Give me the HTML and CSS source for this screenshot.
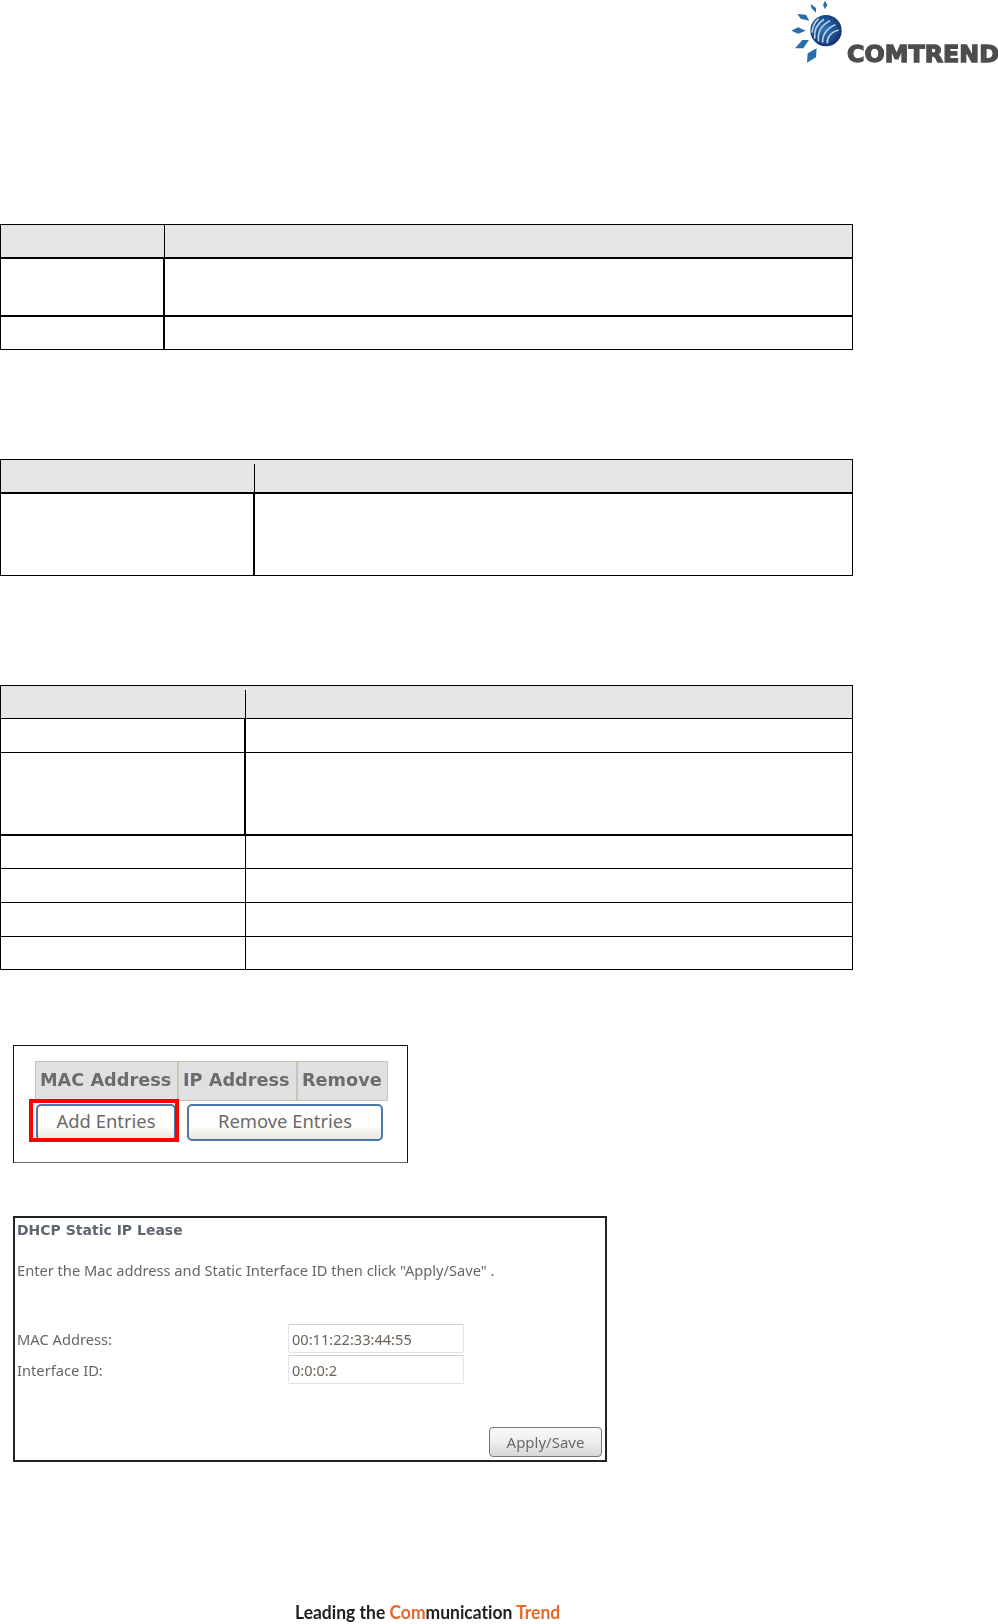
FILE: index.html
```html
<!DOCTYPE html>
<html lang="en">
<head>
<meta charset="utf-8">
<title>DHCP Static IP Lease</title>
<link rel="stylesheet" href="styles.css">
</head>
<body>
<div class="page">
  <header class="top">
    <svg class="logo" viewBox="0 0 684 240" width="228" height="80" aria-label="Comtrend logo">
      <defs>
        <radialGradient id="globe" cx="45%" cy="45%" r="60%">
          <stop offset="0" stop-color="#2f74b5"/>
          <stop offset=".65" stop-color="#1c4c8e"/>
          <stop offset="1" stop-color="#12285f"/>
        </radialGradient>
      </defs>
      <g class="rays">
        <polygon points="165,2 172,15 165,28 159,15"/>
        <polygon points="122,12 138,24 138,38 124,24"/>
        <polygon points="82,42 108,44 118,62 92,56"/>
        <polygon points="64,92 85,82 107,92 85,101"/>
        <polygon points="75,145 97,120 117,120 100,145"/>
        <polygon points="111,188 113,160 140,145 138,172"/>
      </g>
      <circle cx="168" cy="92" r="47" fill="url(#globe)"/>
      <g class="stripes">
        <path d="M126 98 C128 80 134 66 146 56"/>
        <path d="M134 116 C132 92 142 70 162 58 "/>
        <path d="M146 124 C142 100 152 76 180 62"/>
        <path d="M158 128 C156 106 170 84 196 74"/>
        <path d="M172 130 C170 112 182 96 206 90"/>
      </g>
      <text class="logo-text" x="231" y="186" textLength="456" lengthAdjust="spacingAndGlyphs">COMTREND</text>
    </svg>
  </header>

  <section class="tbl t1">
    <div class="row head thick"><div class="cell key"></div><div class="cell"></div></div>
    <div class="row r58 thick"><div class="cell key"></div><div class="cell"></div></div>
    <div class="row r32 last"><div class="cell key"></div><div class="cell"></div></div>
  </section>

  <section class="tbl t2">
    <div class="row head thick notch"><div class="cell key"></div><div class="cell"></div></div>
    <div class="row r81 last"><div class="cell key"></div><div class="cell"></div></div>
  </section>

  <section class="tbl t3">
    <div class="row head h33 notch"><div class="cell key"></div><div class="cell"></div></div>
    <div class="row r34"><div class="cell key"></div><div class="cell"></div></div>
    <div class="row r83 thick"><div class="cell key"></div><div class="cell"></div></div>
    <div class="row r33 slim"><div class="cell key"></div><div class="cell"></div></div>
    <div class="row r34 slim"><div class="cell key"></div><div class="cell"></div></div>
    <div class="row r34 slim"><div class="cell key"></div><div class="cell"></div></div>
    <div class="row r32 slim last"><div class="cell key"></div><div class="cell"></div></div>
  </section>

  <section class="shot entries">
    <div class="entry-head">
      <div class="eh">MAC Address</div>
      <div class="eh">IP Address</div>
      <div class="eh">Remove</div>
    </div>
    <div class="entry-actions">
      <span class="highlight"><button class="btn add" type="button">Add Entries</button></span>
      <button class="btn remove" type="button">Remove Entries</button>
    </div>
  </section>

  <section class="shot lease">
    <h1 class="lease-title">DHCP Static IP Lease</h1>
    <p class="lease-intro">Enter the Mac address and Static Interface ID then click "Apply/Save" .</p>
    <div class="form">
      <label class="lbl" for="mac">MAC Address:</label>
      <input class="field" id="mac" type="text" value="00:11:22:33:44:55">
      <label class="lbl" for="ifid">Interface ID:</label>
      <input class="field" id="ifid" type="text" value="0:0:0:2">
    </div>
    <div class="apply-row"><button class="apply" type="button">Apply/Save</button></div>
  </section>

  <footer class="foot">Leading the <span class="hot">Com</span>munication <span class="hot">Trend</span></footer>
</div>
</body>
</html>
```
FILE: styles.css
```css
* { box-sizing: border-box; }
html, body { margin: 0; padding: 0; background: #fff; }
.page { width: 998px; height: 1624px; overflow: hidden; font-family: "Noto Sans", sans-serif; }

.top { height: 224px; display: flex; justify-content: flex-end; align-items: flex-start; }
.logo { display: block; filter: blur(.4px); }
.rays polygon { fill: #2b6cab; }
.stripes path { fill: none; stroke: #b9d2e6; stroke-width: 5; }
.logo-text { font-family: "DejaVu Sans", sans-serif; font-weight: 700; font-size: 70px; fill: #4d4d4d; stroke: #4d4d4d; stroke-width: 4; }

.tbl { width: 853px; border: 1px solid #000; }
.t2, .t3 { margin-top: 109px; }
.row { display: grid; border-bottom: 1px solid #000; }
.t1 .row { grid-template-columns: 164px 1fr; }
.t2 .row { grid-template-columns: 254px 1fr; }
.t3 .row { grid-template-columns: 245px 1fr; }
.row.thick { border-bottom-width: 2px; }
.row.last { border-bottom: 0; }
.cell.key { border-right: 2px solid #000; }
.row.slim .cell.key { border-right-width: 1px; }

.head { height: 34px; background: #e5e5e5; }
.head.h33 { height: 33px; }
.head .cell.key { border-right-width: 1px; }
.notch .cell.key {
  border-right: 0;
  background: linear-gradient(#000, #000) right bottom / 1px calc(100% - 4px) no-repeat;
}
.r32 { height: 32px; }
.r33 { height: 33px; }
.r34 { height: 34px; }
.r58 { height: 58px; }
.r81 { height: 81px; }
.r83 { height: 83px; }

.shot { margin-left: 13px; color: #666; }
.entries {
  margin-top: 75px; width: 395px; height: 118px;
  border: 1px solid #111; border-bottom-color: #666;
  padding: 15px 0 0 21px;
}
.entry-head {
  display: grid; grid-template-columns: 143px 119px 91px; width: 353px; height: 40px;
  filter: blur(.4px);
}
.eh {
  background: #e0e0e0; border: 1px solid #c8c5b2;
  font-family: "DejaVu Sans", sans-serif; font-weight: 700; font-size: 17.7px; line-height: 36px;
  padding-left: 4px; white-space: nowrap; color: #6c6c6c;
}
.entry-actions { display: flex; gap: 12px; margin-top: 3px; }
.btn {
  height: 37px; padding: 0 0 5px; border: 2px solid #4a79a8; border-radius: 5px;
  background: linear-gradient(#fff, #fdfdfb 60%, #e9e8e0);
  font-family: "Noto Sans", sans-serif; font-size: 18.4px; color: #6a6a6a;
}
.btn.add { display: block; width: 140px; }
.btn.remove { width: 196px; margin-left: -1px; }
.highlight { position: relative; display: block; margin-left: 1px; }
.highlight::after {
  content: ""; box-sizing: border-box; position: absolute; left: -7px; top: -5px; width: 150px; height: 43px;
  border: 4px solid #f00;
}

.lease {
  margin-top: 53px; width: 594px; height: 246px;
  border: 2px solid #222; padding: 0 0 0 2px;
}
.lease-title {
  margin: 2px 0 0; font-size: 14px; line-height: 20px; font-weight: 700;
  font-family: "DejaVu Sans", sans-serif; color: #5f6670; filter: blur(.3px);
}
.lease-intro { margin: 20px 0 0; font-size: 14.65px; line-height: 20px; filter: blur(.3px); white-space: nowrap; }
.form {
  display: grid; grid-template-columns: 271px 176px; grid-auto-rows: 30px; row-gap: 1px;
  margin-top: 43px; align-items: center;
}
.lbl { font-size: 14.7px; line-height: 20px; padding-top: 1px; filter: blur(.3px); }
.field {
  width: 176px; height: 29px; margin: 0; padding: 2px 3px 0;
  border: 1px solid #dfe3ea; border-top-color: #c9ccd2; border-radius: 2px;
  background: #fff; font-family: "Noto Sans", sans-serif; font-size: 14.6px; color: #6b625a; filter: blur(.3px);
}
.apply-row { display: flex; justify-content: flex-end; margin-top: 43px; padding-right: 3px; }
.apply {
  width: 113px; height: 30px; padding: 0; border: 1px solid #777; border-radius: 4px;
  background: linear-gradient(#f8f8f8, #f0f0f0 45%, #d6d6d6);
  font-family: "Noto Sans", sans-serif; font-size: 15px; color: #6a6a6a; filter: blur(.3px);
}

.foot {
  margin: 140px 0 0 295px; font-family: "Lato", sans-serif; font-variant-ligatures: none;
  font-weight: 700; font-size: 19px; line-height: 20px; color: #1f1f1f; white-space: nowrap;
  filter: blur(.3px); transform: scaleX(.92); transform-origin: left center;
}
.hot { color: #e8672a; }
```
